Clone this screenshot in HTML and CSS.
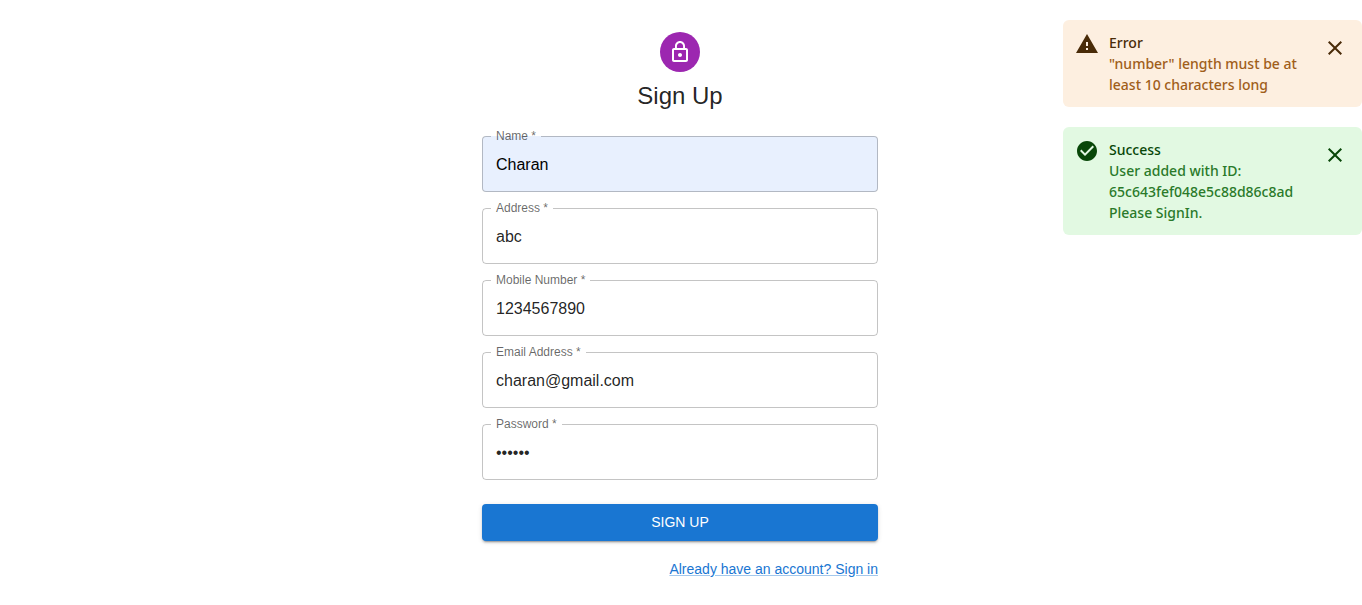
FILE: index.html
```html
<!DOCTYPE html>
<html lang="en">
<head>
<meta charset="utf-8">
<meta name="viewport" content="width=device-width, initial-scale=1">
<title>Sign Up</title>
<link rel="stylesheet" href="styles.css">
</head>
<body>
<main class="page">
  <form class="signup">
    <div class="avatar">
      <svg width="24" height="24" viewBox="0 0 24 24" fill="currentColor" aria-hidden="true"><path d="M12 17c1.1 0 2-.9 2-2s-.9-2-2-2-2 .9-2 2 .9 2 2 2zm6-9h-1V6c0-2.760-2.240-5-5-5S7 3.240 7 6v2H6c-1.100 0-2 .9-2 2v10c0 1.100.9 2 2 2h12c1.100 0 2-.9 2-2V10c0-1.100-.9-2-2-2zM8.900 6c0-1.710 1.390-3.100 3.100-3.100s3.100 1.390 3.100 3.100v2H8.900V6zM18 20H6V10h12v10z"/></svg>
    </div>
    <h1 class="title">Sign Up</h1>
    <div class="fields">
      <fieldset class="field field-filled">
        <legend class="legend"><label for="name">Name *</label></legend>
        <input class="input" id="name" type="text" value="Charan">
      </fieldset>
      <fieldset class="field">
        <legend class="legend"><label for="address">Address *</label></legend>
        <input class="input" id="address" type="text" value="abc">
      </fieldset>
      <fieldset class="field">
        <legend class="legend"><label for="mobile">Mobile Number *</label></legend>
        <input class="input" id="mobile" type="tel" value="1234567890">
      </fieldset>
      <fieldset class="field">
        <legend class="legend"><label for="email">Email Address *</label></legend>
        <input class="input" id="email" type="email" value="charan@gmail.com">
      </fieldset>
      <fieldset class="field">
        <legend class="legend"><label for="password">Password *</label></legend>
        <input class="input" id="password" type="password" value="secret">
      </fieldset>
    </div>
    <button class="submit" type="submit">SIGN UP</button>
    <a class="signin" href="#signin">Already have an account? Sign in</a>
  </form>
</main>
<aside class="toasts">
  <section class="toast toast-error" role="alert">
    <svg class="toast-icon" width="24" height="24" viewBox="0 0 24 24" fill="currentColor" aria-hidden="true"><path d="M1 21h22L12 2 1 21zm12-3h-2v-2h2v2zm0-4h-2v-4h2v4z"/></svg>
    <div class="toast-body">
      <h2 class="toast-title">Error</h2>
      <p class="toast-text">"number" length must be at least 10 characters long</p>
    </div>
    <button class="close" type="button" aria-label="Close"><svg width="24" height="24" viewBox="0 0 24 24" fill="currentColor" aria-hidden="true"><path d="M19 6.410 17.590 5 12 10.590 6.410 5 5 6.410 10.590 12 5 17.590 6.410 19 12 13.410 17.590 19 19 17.590 13.410 12z"/></svg></button>
  </section>
  <section class="toast toast-success" role="status">
    <svg class="toast-icon" width="24" height="24" viewBox="0 0 24 24" fill="currentColor" aria-hidden="true"><path d="M12 2C6.480 2 2 6.480 2 12s4.480 10 10 10 10-4.480 10-10S17.520 2 12 2zm-2 15-5-5 1.410-1.410L10 14.170l7.590-7.590L19 8l-9 9z"/></svg>
    <div class="toast-body">
      <h2 class="toast-title">Success</h2>
      <p class="toast-text">User added with ID: 65c643fef048e5c88d86c8ad Please SignIn.</p>
    </div>
    <button class="close" type="button" aria-label="Close"><svg width="24" height="24" viewBox="0 0 24 24" fill="currentColor" aria-hidden="true"><path d="M19 6.410 17.590 5 12 10.590 6.410 5 5 6.410 10.590 12 5 17.590 6.410 19 12 13.410 17.590 19 19 17.590 13.410 12z"/></svg></button>
  </section>
</aside>
</body>
</html>
```
FILE: styles.css
```css
* { box-sizing: border-box; }

body {
  margin: 0;
  background: #fff;
  color: rgba(0, 0, 0, 0.87);
  font-family: "Liberation Sans", Arial, sans-serif;
}

.page {
  display: flex;
  justify-content: center;
  padding: 32px 26px 24px 24px;
}

.signup {
  display: flex;
  flex-direction: column;
  align-items: center;
  width: 100%;
  max-width: 396px;
}

.avatar {
  display: flex;
  align-items: center;
  justify-content: center;
  width: 40px;
  height: 40px;
  border-radius: 50%;
  background: #9c27b0;
  color: #fff;
}

.title {
  margin: 8px 0 18px;
  font-size: 24px;
  line-height: 32px;
  font-weight: 400;
}

.fields {
  display: flex;
  flex-direction: column;
  gap: 10px;
  width: 100%;
}

.field {
  min-width: 0;
  margin: 0;
  padding: 0;
  border: 1px solid rgba(0, 0, 0, 0.23);
  border-radius: 4px;
}

.field-filled { background: #e8f0fe; }

.legend {
  margin-left: 8px;
  padding: 0 5px;
  color: rgba(0, 0, 0, 0.6);
  font-size: 12px;
  line-height: 13px;
}

.input {
  display: block;
  width: 100%;
  height: 48px;
  padding: 0 13px 4px;
  border: 0;
  outline: 0;
  background: transparent;
  color: inherit;
  font: inherit;
  font-size: 16px;
}

.field-filled .input { color: #000; }

.submit {
  width: 100%;
  margin: 24px 0 18px;
  padding: 6px 16px;
  border: 0;
  border-radius: 4px;
  background: #1976d2;
  color: #fff;
  font: inherit;
  font-size: 14px;
  line-height: 25px;
  box-shadow: 0 3px 1px -2px rgba(0, 0, 0, 0.2), 0 2px 2px rgba(0, 0, 0, 0.14), 0 1px 5px rgba(0, 0, 0, 0.12);
}

.signin {
  align-self: flex-end;
  color: #1976d2;
  font-size: 14px;
  line-height: 20px;
  text-decoration-color: rgba(25, 118, 210, 0.4);
}

.toasts {
  position: fixed;
  top: 20px;
  right: 0;
  display: flex;
  flex-direction: column;
  gap: 20px;
  width: 299px;
}

.toast {
  display: flex;
  align-items: flex-start;
  padding: 12px 11px 12px 12px;
  border-radius: 6px;
  font-family: "Noto Sans", "Open Sans", sans-serif;
  font-size: 14px;
  line-height: 21px;
  font-weight: 500;
}

.toast-error { background: #fdefe0; color: #492b08; }
.toast-success { background: #e2f9e2; color: #084708; }

.toast-icon { flex: none; }

.toast-body {
  flex: 1;
  min-width: 0;
  margin-left: 10px;
}

.toast-title,
.toast-text {
  margin: 0;
  font: inherit;
}

.toast-error .toast-text { color: #a05e1a; }
.toast-success .toast-text { color: #2a7a2a; }

.close {
  display: flex;
  flex: none;
  padding: 4px;
  border: 0;
  background: none;
  color: inherit;
}
```
